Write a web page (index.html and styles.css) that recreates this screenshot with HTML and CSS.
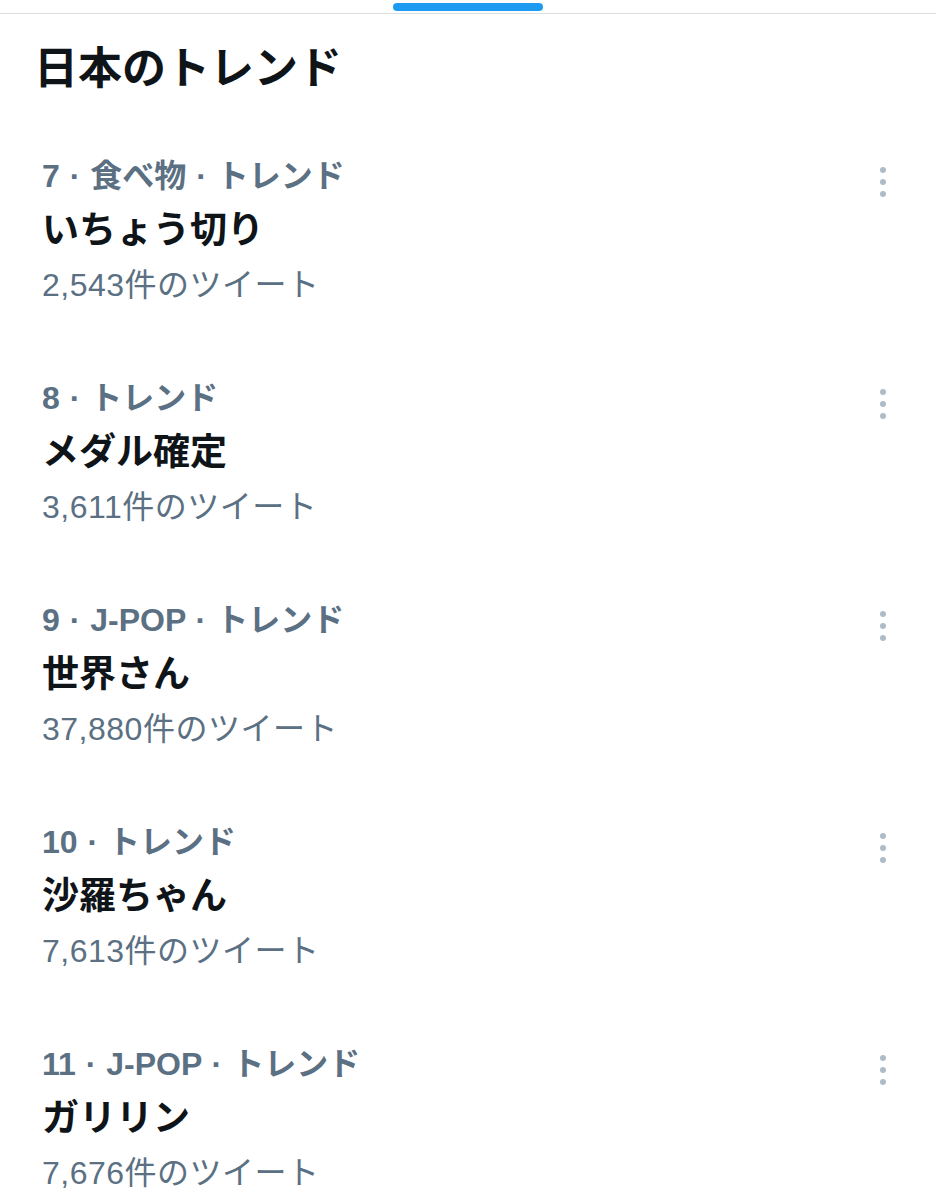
FILE: index.html
```html
<!DOCTYPE html>
<html lang="ja">
<head>
<meta charset="utf-8">
<title>日本のトレンド</title>
<link rel="stylesheet" href="styles.css">
</head>
<body>
<div class="sheet">
  <div class="grabber"><span class="handle"></span></div>
  <h1 class="title">日本のトレンド</h1>
  <ul class="trends">
    <li class="trend">
      <div class="info">
        <div class="meta">7 · 食べ物 · トレンド</div>
        <div class="name">いちょう切り</div>
        <div class="count">2,543件のツイート</div>
      </div>
      <svg class="more" viewBox="0 0 12 30" width="12" height="30"><circle cx="6" cy="3" r="3"/><circle cx="6" cy="15" r="3"/><circle cx="6" cy="27" r="3"/></svg>
    </li>
    <li class="trend">
      <div class="info">
        <div class="meta">8 · トレンド</div>
        <div class="name">メダル確定</div>
        <div class="count">3,611件のツイート</div>
      </div>
      <svg class="more" viewBox="0 0 12 30" width="12" height="30"><circle cx="6" cy="3" r="3"/><circle cx="6" cy="15" r="3"/><circle cx="6" cy="27" r="3"/></svg>
    </li>
    <li class="trend">
      <div class="info">
        <div class="meta">9 · J-POP · トレンド</div>
        <div class="name">世界さん</div>
        <div class="count">37,880件のツイート</div>
      </div>
      <svg class="more" viewBox="0 0 12 30" width="12" height="30"><circle cx="6" cy="3" r="3"/><circle cx="6" cy="15" r="3"/><circle cx="6" cy="27" r="3"/></svg>
    </li>
    <li class="trend">
      <div class="info">
        <div class="meta">10 · トレンド</div>
        <div class="name">沙羅ちゃん</div>
        <div class="count">7,613件のツイート</div>
      </div>
      <svg class="more" viewBox="0 0 12 30" width="12" height="30"><circle cx="6" cy="3" r="3"/><circle cx="6" cy="15" r="3"/><circle cx="6" cy="27" r="3"/></svg>
    </li>
    <li class="trend">
      <div class="info">
        <div class="meta">11 · J-POP · トレンド</div>
        <div class="name">ガリリン</div>
        <div class="count">7,676件のツイート</div>
      </div>
      <svg class="more" viewBox="0 0 12 30" width="12" height="30"><circle cx="6" cy="3" r="3"/><circle cx="6" cy="15" r="3"/><circle cx="6" cy="27" r="3"/></svg>
    </li>
  </ul>
</div>
</body>
</html>
```

FILE: styles.css
```css
* { box-sizing: border-box; }
html, body {
  margin: 0;
  padding: 0;
  background: #ffffff;
}
body {
  font-family: "Liberation Sans", "Noto Sans CJK JP", sans-serif;
  color: #0f1419;
  overflow: hidden;
}
.sheet {
  width: 936px;
  height: 1199px;
  overflow: hidden;
}
.grabber {
  height: 14px;
  padding-top: 3px;
  border-bottom: 1px solid #dcdfe2;
  display: flex;
  justify-content: center;
}
.handle {
  display: block;
  width: 150px;
  height: 8px;
  border-radius: 4px;
  background: #1d9bf0;
}
.title {
  margin: 27px 0 0;
  padding-left: 34px;
  font-size: 44px;
  line-height: 56px;
  font-weight: 700;
  color: #0f1419;
}
.trends {
  list-style: none;
  margin: 59px 0 0;
  padding: 0;
}
.trend {
  display: flex;
  justify-content: space-between;
  align-items: flex-start;
  padding: 0 47px 73px 42px;
}
.trend:last-child {
  padding-bottom: 0;
}
.meta {
  font-size: 32px;
  line-height: 40px;
  font-weight: 700;
  color: #5b7083;
  word-spacing: 1px;
}
.name {
  margin-top: 13px;
  font-size: 37px;
  line-height: 44px;
  font-weight: 700;
  color: #0f1419;
}
.count {
  margin-top: 12px;
  font-size: 32px;
  line-height: 40px;
  color: #5b7083;
  letter-spacing: 0.5px;
}
.more {
  margin-top: 11px;
  fill: #adbcc7;
  flex: none;
}
```
